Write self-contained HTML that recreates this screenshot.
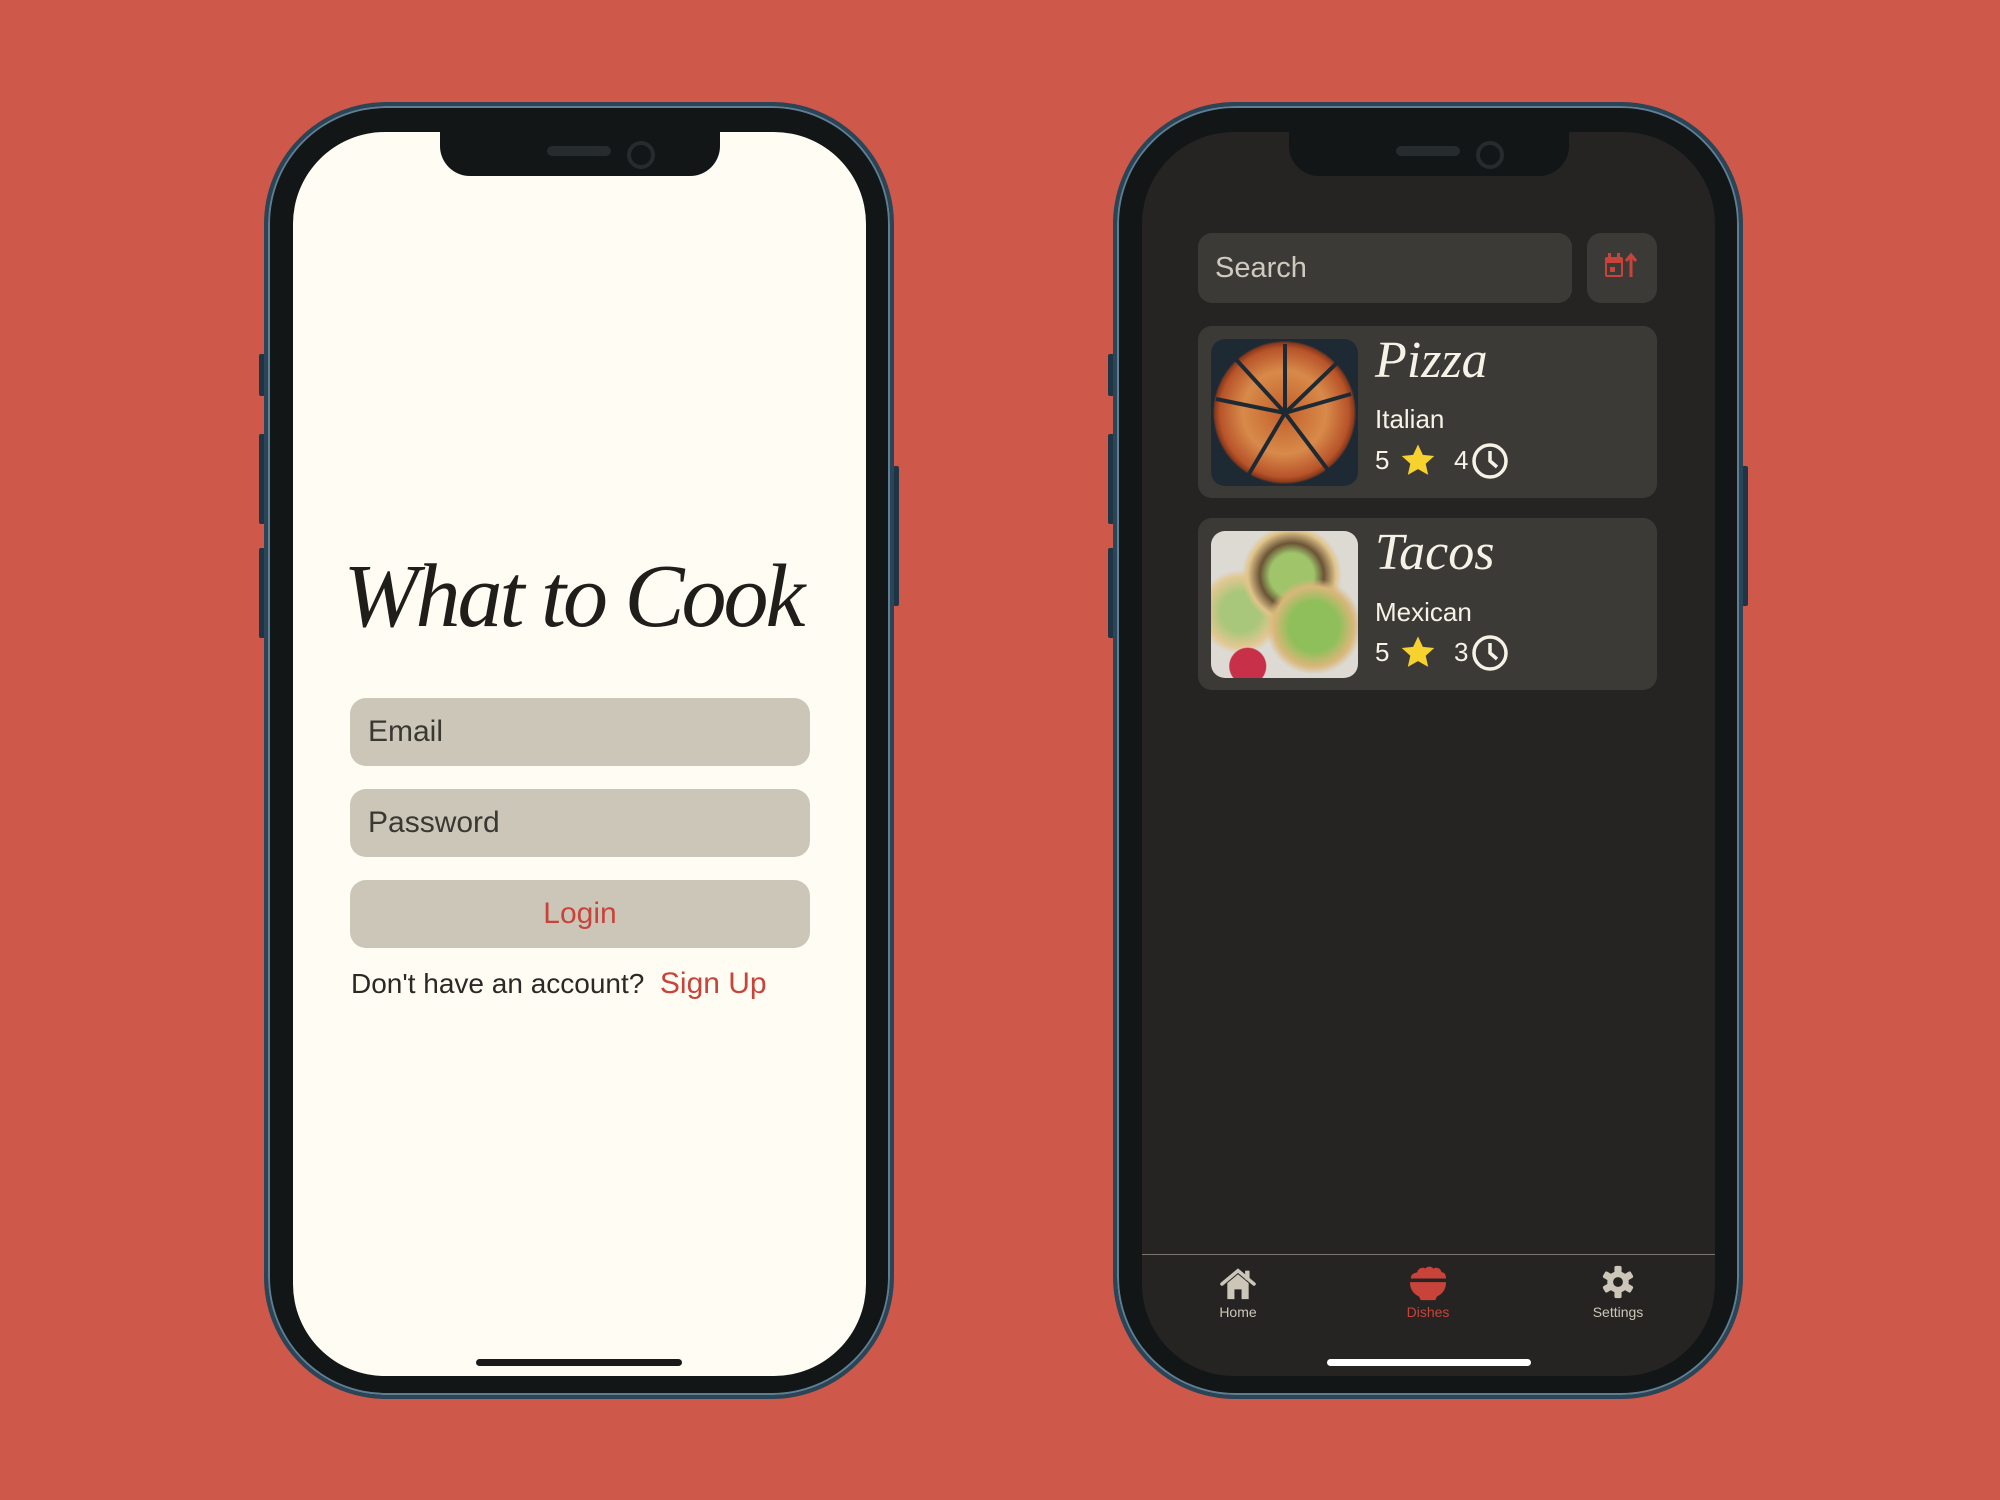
<!DOCTYPE html>
<html><head><meta charset="utf-8"><style>
*{margin:0;padding:0;box-sizing:border-box}
body{width:2000px;height:1500px;background:#ce594b;position:relative;overflow:hidden;font-family:"Liberation Sans","DejaVu Sans",sans-serif}
.abs{position:absolute}
.phone{position:absolute;top:102px;width:630px;height:1297px;border-radius:122px;background:#121617;border:4px solid #2b4456;box-shadow:inset 0 0 0 2px #5d7e93}
.btn{position:absolute;background:#1f3546;border-radius:2px}
.screen{position:absolute;left:25px;top:26px;width:573px;height:1244px;border-radius:92px;overflow:hidden}
.notch{position:absolute;left:147px;top:0;width:280px;height:44px;background:#121617;border-radius:0 0 30px 30px}
.notch:before{content:"";position:absolute;left:107px;top:14px;width:64px;height:10px;border-radius:5px;background:#262b2e}
.notch:after{content:"";position:absolute;left:187px;top:9px;width:20px;height:20px;border-radius:50%;border:4px solid #262b2e}
.field{position:absolute;left:57px;width:460px;height:68px;border-radius:16px;background:#ccc6b9;font-size:30px;color:#3a3833;padding-left:18px;line-height:68px}
.card{position:absolute;left:56px;width:459px;height:172px;border-radius:14px;background:#3c3a36}
.img{position:absolute;left:13px;top:13px;width:147px;height:147px;border-radius:14px;overflow:hidden}
.t{position:absolute;left:177px;color:#f6f2e7}
.script{font-family:"Liberation Serif",serif;font-style:italic;font-weight:normal;white-space:nowrap}
.lbl{position:absolute;top:1172px;text-align:center;font-size:14px;line-height:16px}
</style></head><body>

<div class="btn" style="left:259px;top:354px;width:6px;height:42px"></div>
<div class="btn" style="left:259px;top:434px;width:6px;height:90px"></div>
<div class="btn" style="left:259px;top:548px;width:6px;height:90px"></div>
<div class="btn" style="left:893px;top:466px;width:6px;height:140px"></div>
<div class="phone" style="left:264px">
 <div class="screen" style="background:#fffdf3">
  <div class="notch"></div>
  <div class="abs script" style="left:30px;top:410px;width:500px;text-align:center;font-size:90px;line-height:110px;color:#1f1e1b;letter-spacing:-3px">What to Cook</div>
  <div class="field" style="top:566px">Email</div>
  <div class="field" style="top:657px">Password</div>
  <div class="field" style="top:748px;padding:0;text-align:center;color:#c8443a">Login</div>
  <div class="abs" style="left:58px;top:835px;font-size:28px;color:#2a2926;white-space:nowrap">Don't have an account?&nbsp; <span style="color:#c8443a;font-size:30px">Sign Up</span></div>
  <div class="abs" style="left:183px;top:1227px;width:206px;height:7px;border-radius:4px;background:#1a1a1a"></div>
 </div>
</div>

<div class="btn" style="left:1108px;top:354px;width:6px;height:42px"></div>
<div class="btn" style="left:1108px;top:434px;width:6px;height:90px"></div>
<div class="btn" style="left:1108px;top:548px;width:6px;height:90px"></div>
<div class="btn" style="left:1742px;top:466px;width:6px;height:140px"></div>
<div class="phone" style="left:1113px">
 <div class="screen" style="background:#252422">
  <div class="notch"></div>
  <div class="abs" style="left:56px;top:101px;width:374px;height:70px;border-radius:14px;background:#3c3a36;color:#cfcabf;font-size:29px;line-height:70px;padding-left:17px">Search</div>
  <div class="abs" style="left:445px;top:101px;width:70px;height:70px;border-radius:14px;background:#3c3a36">
   <svg width="70" height="70" viewBox="0 0 70 70"><rect x="18" y="24" width="18" height="20" rx="2" fill="#c8443a"/><rect x="21" y="20" width="3" height="6" fill="#c8443a"/><rect x="30" y="20" width="3" height="6" fill="#c8443a"/><rect x="20" y="30" width="14" height="12" fill="#3c3a36"/><rect x="23" y="34" width="5" height="5" fill="#c8443a"/><path d="M44 44V23M39 28l5-6 5 6" stroke="#c8443a" stroke-width="3" fill="none"/></svg>
  </div>
  <div class="card" style="top:194px">
   <div class="img" style="background:radial-gradient(circle at 50% 50%,#2c2a24 0 3px,#c4632d 4px,#d88a4a 40%,#b8542a 62%,#8a3a1c 67%,#1d2a34 69%),#1b2731">
    <svg width="147" height="147" style="position:absolute;left:0;top:0"><g stroke="#1d2a34" stroke-width="4"><line x1="74" y1="74" x2="74" y2="5"/><line x1="74" y1="74" x2="140" y2="55"/><line x1="74" y1="74" x2="120" y2="135"/><line x1="74" y1="74" x2="35" y2="140"/><line x1="74" y1="74" x2="5" y2="60"/><line x1="74" y1="74" x2="20" y2="15"/><line x1="74" y1="74" x2="130" y2="20"/></g></svg>
   </div>
   <div class="t script" style="top:5px;font-size:52px">Pizza</div>
   <div class="t" style="top:78px;font-size:26px">Italian</div>
   <div class="t" style="top:119px;font-size:26px">5</div>
   <svg class="abs" style="left:202px;top:117px" width="36" height="34" viewBox="0 0 24 23"><path d="M12 1l3.3 7 7.7.8-5.8 5.2 1.7 7.6L12 17.7 5.1 21.6l1.7-7.6L1 8.8l7.7-.8z" fill="#f7d12e"/></svg>
   <div class="t" style="left:256px;top:119px;font-size:26px">4</div>
   <svg class="abs" style="left:273px;top:116px" width="38" height="38" viewBox="0 0 38 38"><circle cx="19" cy="19" r="16" stroke="#f6f2e7" stroke-width="3.5" fill="none"/><path d="M19 9v10l7 6" stroke="#f6f2e7" stroke-width="3.5" fill="none"/></svg>
  </div>
  <div class="card" style="top:386px">
   <div class="img" style="background:radial-gradient(circle at 25% 92%,#c8304a 0 18px,transparent 19px),radial-gradient(circle at 70% 65%,#8fbf5a 0 25px,#d9b77a 40px,transparent 48px),radial-gradient(circle at 55% 30%,#9fc46a 0 22px,#6b5436 32px,#e0c48a 44px,transparent 50px),radial-gradient(circle at 20% 55%,#a9c77a 0 20px,#e2c792 35px,transparent 42px),#dcdad3"></div>
   <div class="t script" style="top:5px;font-size:52px">Tacos</div>
   <div class="t" style="top:79px;font-size:26px">Mexican</div>
   <div class="t" style="top:119px;font-size:26px">5</div>
   <svg class="abs" style="left:202px;top:117px" width="36" height="34" viewBox="0 0 24 23"><path d="M12 1l3.3 7 7.7.8-5.8 5.2 1.7 7.6L12 17.7 5.1 21.6l1.7-7.6L1 8.8l7.7-.8z" fill="#f7d12e"/></svg>
   <div class="t" style="left:256px;top:119px;font-size:26px">3</div>
   <svg class="abs" style="left:273px;top:116px" width="38" height="38" viewBox="0 0 38 38"><circle cx="19" cy="19" r="16" stroke="#f6f2e7" stroke-width="3.5" fill="none"/><path d="M19 9v10l7 6" stroke="#f6f2e7" stroke-width="3.5" fill="none"/></svg>
  </div>
  <div class="abs" style="left:0;top:1122px;width:573px;height:1px;background:#7a7772"></div>
  <svg class="abs" style="left:78px;top:1136px" width="36" height="32" viewBox="0 0 40 36"><path d="M2 18L20 3l18 15" stroke="#ccc6b9" stroke-width="4" fill="none" stroke-linecap="round"/><rect x="28" y="3" width="5" height="10" fill="#ccc6b9"/><path d="M8 17L20 7l12 10v18h-8V24h-8v11H8z" fill="#ccc6b9"/></svg>
  <div class="lbl" style="left:56px;width:80px;color:#ccc6b9">Home</div>
  <svg class="abs" style="left:267px;top:1133px" width="38" height="36" viewBox="0 0 42 40"><path d="M2 15c0-6 5-6 7-7 1-5 7-6 9-4 2-3 7-3 9 0 3-2 8-1 9 4 3 0 5 2 5 7z" fill="#c8443a"/><path d="M1 19h40c0 10-6 14-10 16l-2 4H13l-2-4C7 33 1 29 1 19z" fill="#c8443a"/></svg>
  <div class="lbl" style="left:246px;width:80px;color:#c8443a">Dishes</div>
  <svg class="abs" style="left:459px;top:1133px" width="34" height="34" viewBox="0 0 38 38"><g fill="#ccc6b9"><circle cx="19" cy="19" r="12"/><rect x="15" y="1" width="8" height="36" rx="2"/><rect x="15" y="1" width="8" height="36" rx="2" transform="rotate(60 19 19)"/><rect x="15" y="1" width="8" height="36" rx="2" transform="rotate(120 19 19)"/></g><circle cx="19" cy="19" r="5.5" fill="#252422"/></svg>
  <div class="lbl" style="left:426px;width:100px;color:#ccc6b9">Settings</div>
  <div class="abs" style="left:185px;top:1227px;width:204px;height:7px;border-radius:4px;background:#ffffff"></div>
 </div>
</div>
</body></html>
